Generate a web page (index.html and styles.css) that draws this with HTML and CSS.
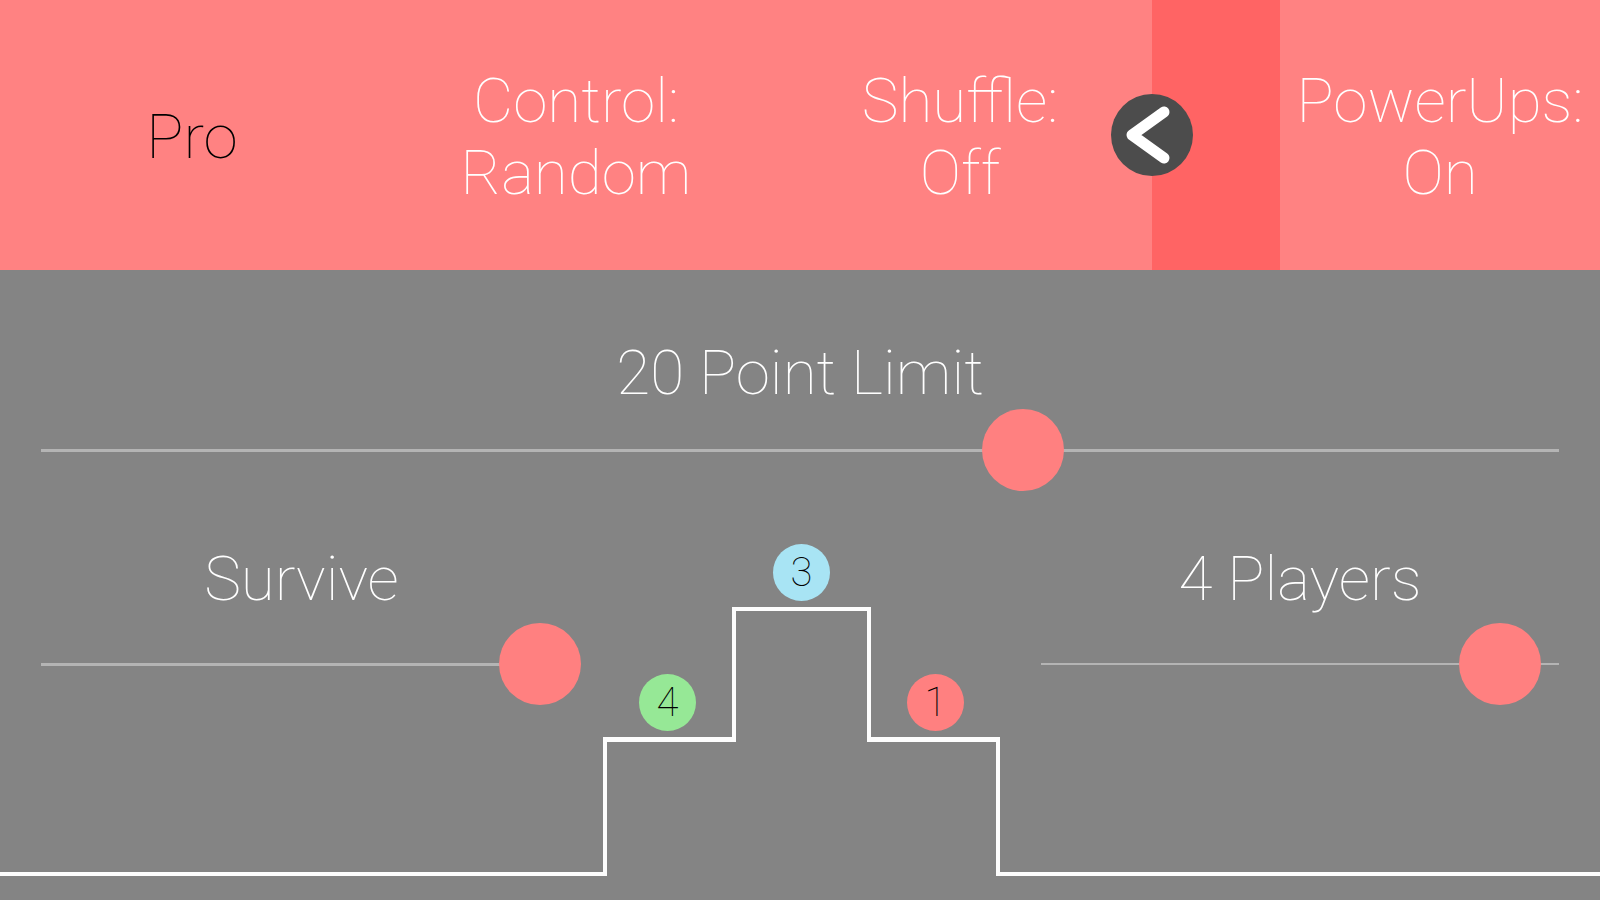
FILE: index.html
```html
<!DOCTYPE html>
<html lang="en">
<head>
    <meta charset="UTF-8">
    <meta name="viewport" content="width=device-width, initial-scale=1.0">
    <title>Game Setup</title>
    <link rel="stylesheet" href="styles.css">
</head>
<body>
    <header class="options">
        <button class="option option-selected" type="button">Pro</button>
        <button class="option" type="button">Control:<br>Random</button>
        <button class="option" type="button">Shuffle:<br>Off</button>
        <div class="drawer">
            <button class="drawer-toggle" type="button" aria-label="Back">
                <svg viewBox="0 0 82 82" aria-hidden="true">
                    <path d="M53 18 L21 41 L53 64" fill="none" stroke="#fff" stroke-width="11" stroke-linecap="round" stroke-linejoin="round"/>
                </svg>
            </button>
        </div>
        <button class="option" type="button">PowerUps:<br>On</button>
    </header>

    <main class="setup">
        <div class="setting setting-limit">
            <label for="limit">20 Point Limit</label>
            <input class="slider" type="range" id="limit" min="0" max="1000" value="647">
        </div>

        <div class="stage">
            <div class="setting floor">
                <label for="mode">Survive</label>
                <input class="slider" type="range" id="mode" min="0" max="1000" value="957">
            </div>

            <div class="podium">
                <div class="place">
                    <span class="ball green">4</span>
                    <div class="step step-left"></div>
                </div>
                <div class="place place-first">
                    <span class="ball blue">3</span>
                    <div class="step step-top"></div>
                </div>
                <div class="place">
                    <span class="ball red">1</span>
                    <div class="step step-right"></div>
                </div>
            </div>

            <div class="setting floor">
                <label for="players">4 Players</label>
                <input class="slider slider-thin" type="range" id="players" min="0" max="1000" value="886">
            </div>
        </div>
    </main>
</body>
</html>
```
FILE: styles.css
```css
* {
    margin: 0;
    padding: 0;
    box-sizing: border-box;
}

body {
    display: flex;
    flex-direction: column;
    min-height: 100vh;
    background: #848484;
    color: #fff;
    font-family: Roboto, sans-serif;
    font-size: 62px;
    font-weight: 100;
    line-height: 72px;
}

/* top bar */
.options {
    display: grid;
    grid-template-columns: 24fr 24fr 24fr 8fr 20fr;
    min-height: 30vh;
    background: #ff8282;
}

.option {
    padding-top: 4px;
    border: none;
    background: none;
    color: #fff;
    font: inherit;
    cursor: pointer;
}

.option-selected {
    color: #000;
}

.drawer {
    position: relative;
    background: #ff6464;
}

.drawer-toggle {
    position: absolute;
    top: 50%;
    left: 0;
    width: 82px;
    height: 82px;
    border: none;
    border-radius: 50%;
    background: #4c4c4c;
    transform: translate(-50%, -50%);
    cursor: pointer;
}

.drawer-toggle svg {
    display: block;
}

/* sliders */
.setup {
    display: flex;
    flex: 1;
    flex-direction: column;
    padding-bottom: 24px;
}

.setting {
    display: flex;
    flex-direction: column;
    gap: 8px;
    padding-top: 52px;
    text-align: center;
}

.setting-limit {
    gap: 0;
    padding-top: 67px;
}

.slider {
    width: 100%;
    height: 82px;
    appearance: none;
    background: linear-gradient(#b4b4b4, #b4b4b4) no-repeat center / calc(100% - 82px) 3px;
    cursor: pointer;
}

.slider-thin {
    background-size: calc(100% - 82px) 2px;
}

.slider::-webkit-slider-thumb {
    width: 82px;
    height: 82px;
    appearance: none;
    border-radius: 50%;
    background: #ff8080;
}

/* podium */
.stage {
    display: grid;
    flex: 1;
    grid-template-columns: minmax(0, 603fr) 397px minmax(0, 600fr);
}

.floor {
    border-bottom: 4px solid #fdfdfd;
}

.podium {
    display: grid;
    grid-template-columns: 1fr 139px 1fr;
    align-items: end;
}

.place {
    display: flex;
    flex-direction: column;
    align-items: center;
    gap: 6px;
}

.place-first {
    padding-bottom: 134px;
}

.ball {
    width: 57px;
    height: 57px;
    border-radius: 50%;
    color: #000;
    font-size: 40px;
    line-height: 57px;
    text-align: center;
}

.green {
    background: #96e896;
}

.blue {
    background: #a8e4f4;
}

.red {
    background: #ff8080;
}

.step {
    width: 100%;
    height: 139px;
    border: 0 solid #fdfdfd;
    border-top-width: 5px;
}

.step-left {
    border-left-width: 4px;
}

.step-right {
    border-right-width: 4px;
}

.step-top {
    height: 135px;
    border-width: 4px 4px 0;
}
```
